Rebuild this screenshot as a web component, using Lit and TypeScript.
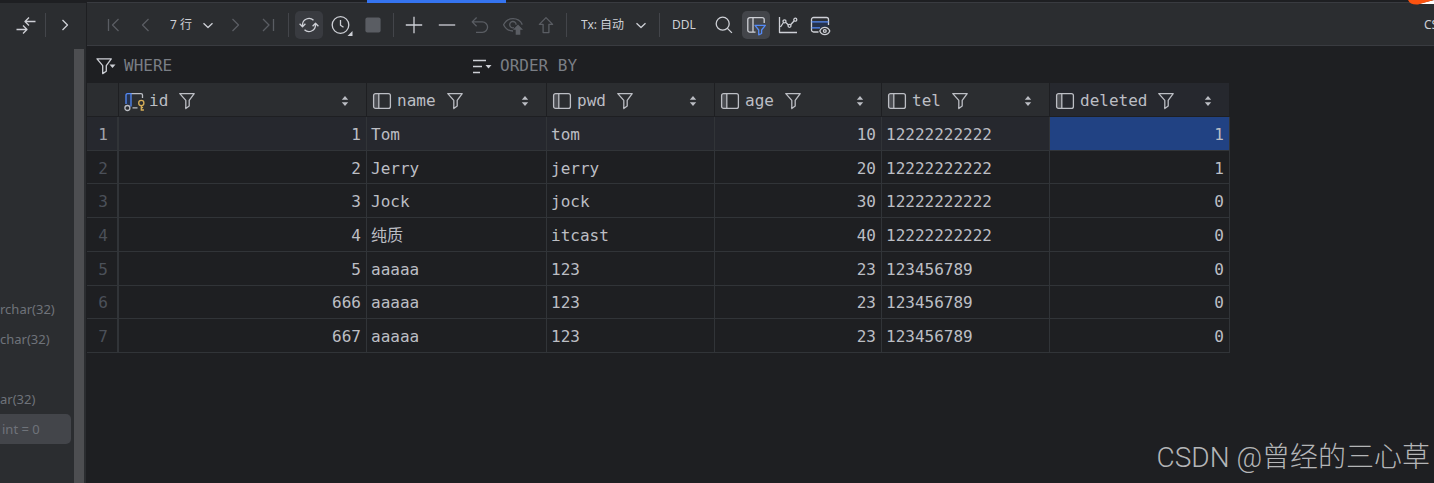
import { LitElement, html, css, svg, nothing, SVGTemplateResult } from "lit";
import { customElement, property } from "lit/decorators.js";

const icons: Record<string, SVGTemplateResult> = {
  first: svg`<path d="M5.5 4v12M15.5 4l-6 6 6 6"/>`,
  prev: svg`<path d="M13.5 4l-6 6 6 6"/>`,
  next: svg`<path d="M6.5 4l6 6-6 6"/>`,
  last: svg`<path d="M15.500 4v12M5 4l6 6-6 6"/>`,
  down: svg`<path d="M5.500 8.200 10 12.500l4.500-4.300"/>`,
  right: svg`<path d="M7.500 5l5 5-5 5"/>`,
  collapse: svg`<path d="M19.500 6.500H9.300M13 2.500l-4 4 4 4M.5 14.500h10.200M7 10.500l4 4-4 4"/>`,
  refresh: svg`<path d="M3.500 11.500V10a6.500 6.500 0 0 1 11-4.700M16.500 8.500V10a6.500 6.500 0 0 1-11 4.700M.6 8.800l2.900 2.900 2.900-2.900M13.600 11.200l2.900-2.900 2.900 2.900"/>`,
  clock: svg`<circle cx="9.500" cy="10" r="8.300"/><path d="M9.500 5v5.200l3 2"/><path class="fill" d="M21.500 16v5h-5z"/>`,
  stop: svg`<rect class="fill" x="2.400" y="2.400" width="15.200" height="15.200" rx="2"/>`,
  plus: svg`<path d="M10 1.800v16.400M1.800 10h16.400"/>`,
  minus: svg`<path d="M1.800 10h16.400"/>`,
  undo: svg`<path d="M6.600 2.500 2.200 6.900l4.400 4.400M2.400 6.900h10a5.200 5.200 0 0 1 0 10.400H6"/>`,
  submit: svg`<path d="M10 16C5.500 16 2.300 13.500.6 9.800 2.300 6 5.600 3.700 10 3.700s7.600 2.300 9.300 5.900"/><path d="M11 12.700a3.200 3.200 0 1 1 2.100-3"/><path class="fill" d="M15 9.500l5 5.200h-2.700v5.100h-4.600v-5.100H10z"/>`,
  up: svg`<path d="M10 2.600l6.600 6.800h-3.700v8.200H7.100V9.400H3.400z"/>`,
  search: svg`<circle cx="8.700" cy="8.700" r="6.500"/><path d="M13.400 13.400l4.500 4.500"/>`,
  filterTable: svg`<rect class="shade" x="2.400" y="3.200" width="4" height="13.400"/><path d="M9.500 17.200H3.800a2 2 0 0 1-2-2V4.600a2 2 0 0 1 2-2h12.400a2 2 0 0 1 2 2V8M7 2.600v14.600"/><path class="blue" d="M9 10.300h10.300l-3.700 4.700v3.500l-2.900 1.300V15z"/>`,
  chart: svg`<path d="M1.500 2v15.500h17.500M2.500 12l3-4.500M7.500 7.300l3 2.700M12.600 9.800l3.700-4"/><circle cx="6.500" cy="6.300" r="1.500"/><circle cx="11.500" cy="10.800" r="1.500"/><circle cx="17.300" cy="4.700" r="1.500"/>`,
  view: svg`<path class="blueFill" d="M1.500 7h17v4.500h-6l-2 2h-9z"/><path d="M8.500 17H3.500a2 2 0 0 1-2-2V4.500a2 2 0 0 1 2-2h13a2 2 0 0 1 2 2V10"/><path class="blue" d="M1.500 6.800h17M1.500 12.800h8.500"/><path d="M9.800 16c1-2.300 2.800-3.600 5-3.600s4 1.300 5 3.600c-1 2.300-2.800 3.600-5 3.600s-4-1.300-5-3.600z"/><circle cx="14.800" cy="16" r="1.400"/>`,
  funnel: svg`<path d="M2.800 2.600h14.400l-5 6.800v5.600l-3.400 2.600V9.400z"/>`,
  funnelMenu: svg`<path d="M1 2.800h14.300l-5 6.800v5.600l-3.600 2.400V9.600z"/><path class="fill" d="M13.500 8.500h6L16.500 12z"/>`,
  sortMenu: svg`<path d="M1 4.500h13M1 10.500h9M1 16.500h7"/><path class="fill" d="M13.500 9h6L16.500 12.500z"/>`,
  column: svg`<rect class="shade" x="1.700" y="2.700" width="5" height="14.600" rx="1"/><rect x="1.600" y="2.600" width="16.800" height="14.800" rx="2"/><path d="M6.800 2.600v14.800"/>`,
  key: svg`<path d="M8.500 16.800h5M7 2.600h10a1.500 1.500 0 0 1 1.500 1.500V7"/><path class="blueFill" d="M2 13V4.100a1.500 1.500 0 0 1 1.500-1.500H7v14"/><path class="blue" d="M2 13V4.100a1.500 1.500 0 0 1 1.500-1.500H7v13"/><circle cx="3.400" cy="17" r="2.500"/><g class="gold"><circle cx="17.300" cy="12" r="2.600"/><path d="M17.300 14.600v5.200M17.300 19h2.600M17.300 16.500h1.800"/></g>`,
  sort: svg`<path class="fill" d="M6.800 8.800 10 5l3.200 3.800zM6.800 11.200 10 15l3.200-3.800z"/>`,
};

@customElement("ui-icon")
export class UiIcon extends LitElement {
  @property() name = "";

  static styles = css`
    :host { display: inline-flex; flex: none; }
    .glyph {
      display: block;
      width: 20px;
      height: 20px;
      overflow: visible;
      fill: none;
      stroke: currentColor;
      stroke-width: 1.3;
      stroke-linejoin: round;
    }
    .fill { fill: currentColor; stroke: none; }
    .shade { fill: #4b4d52; stroke: none; }
    .blue { stroke: #548af7; }
    .blueFill { fill: #25324d; stroke: none; }
    .gold { stroke: #d6ae58; }
  `;

  render() {
    return html`<svg class="glyph" viewBox="0 0 20 20" aria-hidden="true">${icons[this.name] ?? nothing}</svg>`;
  }
}

interface Column {
  key: string;
  width: number;
  numeric?: boolean;
  primary?: boolean;
}

const columns: Column[] = [
  { key: "id", width: 248, numeric: true, primary: true },
  { key: "name", width: 180 },
  { key: "pwd", width: 168 },
  { key: "age", width: 167, numeric: true },
  { key: "tel", width: 168 },
  { key: "deleted", width: 180, numeric: true },
];

const rows: (string | number)[][] = [
  [1, "Tom", "tom", 10, "12222222222", 1],
  [2, "Jerry", "jerry", 20, "12222222222", 1],
  [3, "Jock", "jock", 30, "12222222222", 0],
  [4, "纯质", "itcast", 40, "12222222222", 0],
  [5, "aaaaa", "123", 23, "123456789", 0],
  [666, "aaaaa", "123", 23, "123456789", 0],
  [667, "aaaaa", "123", 23, "123456789", 0],
];

@customElement("data-grid")
export class DataGrid extends LitElement {
  static styles = css`
    :host { display: block; overflow: hidden; }
    .grid {
      width: 1143px;
      height: 270px;
      table-layout: fixed;
      border-collapse: separate;
      border-spacing: 0;
      font: 16px/20px "DejaVu Sans Mono", "Noto Sans CJK SC", monospace;
      color: #bcbec4;
    }
    .num { width: 32px; }
    th, td { padding: 0 4px; font-weight: 400; text-align: left; white-space: nowrap; box-sizing: border-box; }
    thead th { height: 34px; padding: 2px 4px 0; background: #2b2d30; border-right: 1px solid #1e1f22; border-bottom: 1px solid #1e1f22; }
    thead .active { background: #26282e; }
    tbody th, tbody td { padding-top: 3px; border-right: 1px solid #313438; border-bottom: 1px solid #313438; }
    tbody th { color: #4b5059; padding-right: 9px; text-align: right; border-right-width: 2px; }
    tbody .numeric { text-align: right; padding-right: 5px; }
    .current th, .current td { background: #26282e; }
    .current th { color: #a1a3ab; }
    .current .active { background: #214283; }
    .head { display: flex; align-items: center; gap: 5px; padding-left: 1px; }
    .filter, .sort { display: flex; padding: 0; border: 0; background: none; color: inherit; }
    .filter { margin-left: 4px; }
    .sort { margin-left: auto; margin-right: 7px; }
  `;

  render() {
    const last = columns.length - 1;
    return html`
      <table class="grid">
        <colgroup>
          <col class="num" />
          ${columns.map((c) => html`<col style="width:${c.width}px" />`)}
        </colgroup>
        <thead>
          <tr>
            <th></th>
            ${columns.map(
              (c, i) => html`<th scope="col" class=${i === last ? "active" : ""}>
                <div class="head">
                  <ui-icon name=${c.primary ? "key" : "column"}></ui-icon>
                  <span>${c.key}</span>
                  <button class="filter" aria-label="Filter ${c.key}"><ui-icon name="funnel"></ui-icon></button>
                  <button class="sort" aria-label="Sort ${c.key}"><ui-icon name="sort"></ui-icon></button>
                </div>
              </th>`,
            )}
          </tr>
        </thead>
        <tbody>
          ${rows.map(
            (r, n) => html`<tr class=${n === 0 ? "current" : ""}>
              <th scope="row">${n + 1}</th>
              ${r.map(
                (v, i) =>
                  html`<td class="${columns[i].numeric ? "numeric" : ""} ${i === last ? "active" : ""}">${v}</td>`,
              )}
            </tr>`,
          )}
        </tbody>
      </table>
    `;
  }
}

@customElement("app-root")
export class AppRoot extends LitElement {
  static styles = css`
    :host {
      display: flex;
      position: relative;
      min-height: 100vh;
      overflow: hidden;
      background: #1e1f22;
      color: #ced0d6;
      font: 12px/20px "Noto Sans", "Noto Sans CJK SC", sans-serif;
    }
    button, select, input { font: inherit; color: inherit; border: 0; margin: 0; padding: 0; background: none; }

    .side { flex: none; width: 86px; background: #2b2d30; display: flex; flex-direction: column; }
    .sideBar { height: 44px; padding-bottom: 2px; border-top: 3px solid #1e1f22; display: flex; align-items: center; gap: 9px; padding-left: 16px; }
    .sideBody { flex: 1; display: flex; padding-right: 2px; }
    .tree { flex: 1; list-style: none; margin: 0; padding: 245px 3px 0 0; font-size: 13px; line-height: 31px; color: #6f737a; white-space: nowrap; }
    .tree li { height: 30px; overflow: hidden; }
    .tree .picked { background: #43454a; border-radius: 0 5px 5px 0; padding-left: 2px; }
    .scroll { width: 10px; background: #4d4e51; }

    .main { flex: 1; min-width: 0; padding-left: 1px; }
    .tabs { height: 3px; box-sizing: border-box; border-bottom: 1px solid #393b40; display: flex; padding-left: 280px; }
    .tab { width: 139px; height: 3px; background: #3574f0; }
    .bar { height: 40px; padding-top: 2px; background: #2b2d30; border-bottom: 1px solid #393b40; display: flex; align-items: center; padding-left: 12px; }
    .group { display: flex; align-items: center; gap: 5px; }
    .tight { gap: 4px; }
    .rule { flex: none; width: 1px; height: 24px; background: #43454a; margin: 0 6px; }
    .sideBar .rule { margin: 0; }
    .tool { display: flex; align-items: center; justify-content: center; width: 28px; height: 28px; border-radius: 5px; }
    .on { background: #43454a; }
    .soft { background: #393b40; }
    .tool:disabled { color: #5a5d63; }
    .pick { display: grid; align-items: center; justify-items: end; }
    .pick select, .pick ui-icon { grid-area: 1 / 1; }
    .pick ui-icon { pointer-events: none; }
    .pick select { appearance: none; height: 24px; }
    .pages { margin-left: 7px; }
    .pages select { width: 48px; }
    .tx { margin: 0 2px 0 8px; }
    .tx select { width: 70px; }
    .ddl { padding: 0 6px; margin-right: 8px; }
    .account { margin-left: auto; width: 10px; overflow: hidden; white-space: nowrap; }

    .query { height: 37px; box-sizing: border-box; display: grid; grid-template-columns: 376px 1fr; align-items: center; padding: 2px 0 0 9px; font: 16px/20px "DejaVu Sans Mono", monospace; color: #7a7e85; }
    .clause { display: flex; align-items: center; gap: 8px; }
    .clause ui-icon { color: #ced0d6; }
    .clause input { flex: 1; min-width: 0; height: 24px; outline: 0; }

    .mascot { position: absolute; top: 0; right: 0; width: 26px; height: 5px; }
    .watermark { position: absolute; right: 4px; bottom: 5px; font: 28px/40px Roboto, "Noto Sans CJK SC", sans-serif; font-weight: 300; color: #b4b5b7; }
  `;

  private tool(name: string, label: string, opts: { off?: boolean; cls?: string } = {}) {
    return html`<button class="tool ${opts.cls ?? ""}" aria-label=${label} ?disabled=${opts.off ?? false}>
      <ui-icon name=${name}></ui-icon>
    </button>`;
  }

  render() {
    return html`
      <aside class="side">
        <div class="sideBar">
          <ui-icon name="collapse"></ui-icon>
          <span class="rule"></span>
          <ui-icon name="right"></ui-icon>
        </div>
        <div class="sideBody">
          <ul class="tree">
            <li>rchar(32)</li>
            <li>char(32)</li>
            <li></li>
            <li>ar(32)</li>
            <li class="picked">int = 0</li>
          </ul>
          <div class="scroll"></div>
        </div>
      </aside>
      <main class="main">
        <div class="tabs"><div class="tab"></div></div>
        <div class="bar">
          <div class="group tight">
            ${this.tool("first", "First page", { off: true })} ${this.tool("prev", "Previous page", { off: true })}
            <label class="pick pages">
              <select aria-label="Page size"><option>7 行</option></select>
              <ui-icon name="down"></ui-icon>
            </label>
            ${this.tool("next", "Next page", { off: true })} ${this.tool("last", "Last page", { off: true })}
          </div>
          <span class="rule"></span>
          <div class="group tight">
            ${this.tool("refresh", "Reload", { cls: "soft" })} ${this.tool("clock", "Auto reload")}
            ${this.tool("stop", "Stop", { off: true })}
          </div>
          <span class="rule"></span>
          <div class="group">
            ${this.tool("plus", "Add row")} ${this.tool("minus", "Delete row")}
            ${this.tool("undo", "Revert", { off: true })} ${this.tool("submit", "Preview changes", { off: true })}
            ${this.tool("up", "Submit", { off: true })}
          </div>
          <span class="rule"></span>
          <label class="pick tx">
            <select aria-label="Transaction mode"><option>Tx: 自动</option></select>
            <ui-icon name="down"></ui-icon>
          </label>
          <span class="rule"></span>
          <button class="ddl">DDL</button>
          <div class="group tight">
            ${this.tool("search", "Find")} ${this.tool("filterTable", "Filter rows", { cls: "on" })}
            ${this.tool("chart", "Show chart")} ${this.tool("view", "View options")}
          </div>
          <span class="account">CS</span>
        </div>
        <div class="query">
          <div class="clause">
            <ui-icon name="funnelMenu"></ui-icon>
            <label for="where">WHERE</label><input id="where" />
          </div>
          <div class="clause">
            <ui-icon name="sortMenu"></ui-icon>
            <label for="order">ORDER BY</label><input id="order" />
          </div>
        </div>
        <data-grid></data-grid>
      </main>
      <svg class="mascot" viewBox="0 0 26 5" aria-hidden="true">
        <path fill="#fff" d="M6 5 26 0v4H10z" />
        <path fill="#fc5310" d="M0 0h26L10 4.500Q2 5 0 0z" />
      </svg>
      <div class="watermark">CSDN @曾经的三心草</div>
    `;
  }
}
